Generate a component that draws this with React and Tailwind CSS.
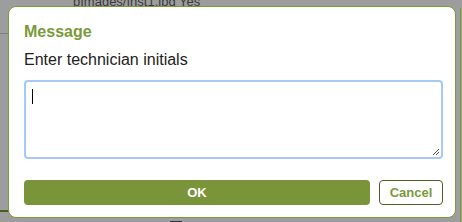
import React from "react";

export default function App() {
  return (
    <div className="relative w-[462px] h-[222px] overflow-hidden bg-[#9d9d9d]" style={{ fontFamily: '"Liberation Sans", Arial, sans-serif' }}>
      {/* background page content under the modal overlay */}
      <div className="absolute left-[73px] top-[-6px] text-[13px] leading-[15px] text-[#3a3a3a]">pImages/Inst1.jpg Yes</div>
      <div className="absolute left-0 top-[33px] w-[10px] h-px bg-[#7d7d7d]" />
      <div className="absolute left-0 top-[210px] w-[10px] h-[2px] bg-[#4b5a26]" />
      <div className="absolute right-[1px] top-[8px] bottom-0 w-px bg-[#7a9a3a]" />
      <div className="absolute left-[170px] top-[221px] w-[12px] h-px bg-[#333]" />

      {/* dialog */}
      <div className="absolute left-[8px] top-[6px] w-[448px] h-[212px] bg-white border border-[#7a9a3a] rounded-[8px] pl-[15px] pr-[10px] pt-[15px] flex flex-col">
        <div className="text-[16px] font-bold text-[#7a9a3a] leading-[20px]">Message</div>
        <div className="mt-[8px] text-[16px] text-[#222] leading-[20px]">Enter technician initials</div>
        <div className="mt-[10px] w-[419px] h-[79px] shrink-0 border-2 border-[#a6c8fa] rounded-[4px] relative">
          <div className="absolute left-[6px] top-[7px] w-px h-[15px] bg-black" />
          <svg className="absolute right-[1px] bottom-[1px]" width="8" height="8" viewBox="0 0 8 8">
            <path d="M7 1 L1 7 M7 4 L4 7" stroke="#555" strokeWidth="1" fill="none" />
          </svg>
        </div>
        <div className="mt-[21px] flex gap-[9px]">
          <button className="w-[346px] h-[25px] shrink-0 rounded-[4px] bg-[#7a943a] text-white text-[13px] font-bold">OK</button>
          <button className="w-[64px] h-[25px] shrink-0 rounded-[4px] bg-white border border-[#4e5e28] text-[#7a9a3a] text-[13px] font-bold">Cancel</button>
        </div>
      </div>
    </div>
  );
}
